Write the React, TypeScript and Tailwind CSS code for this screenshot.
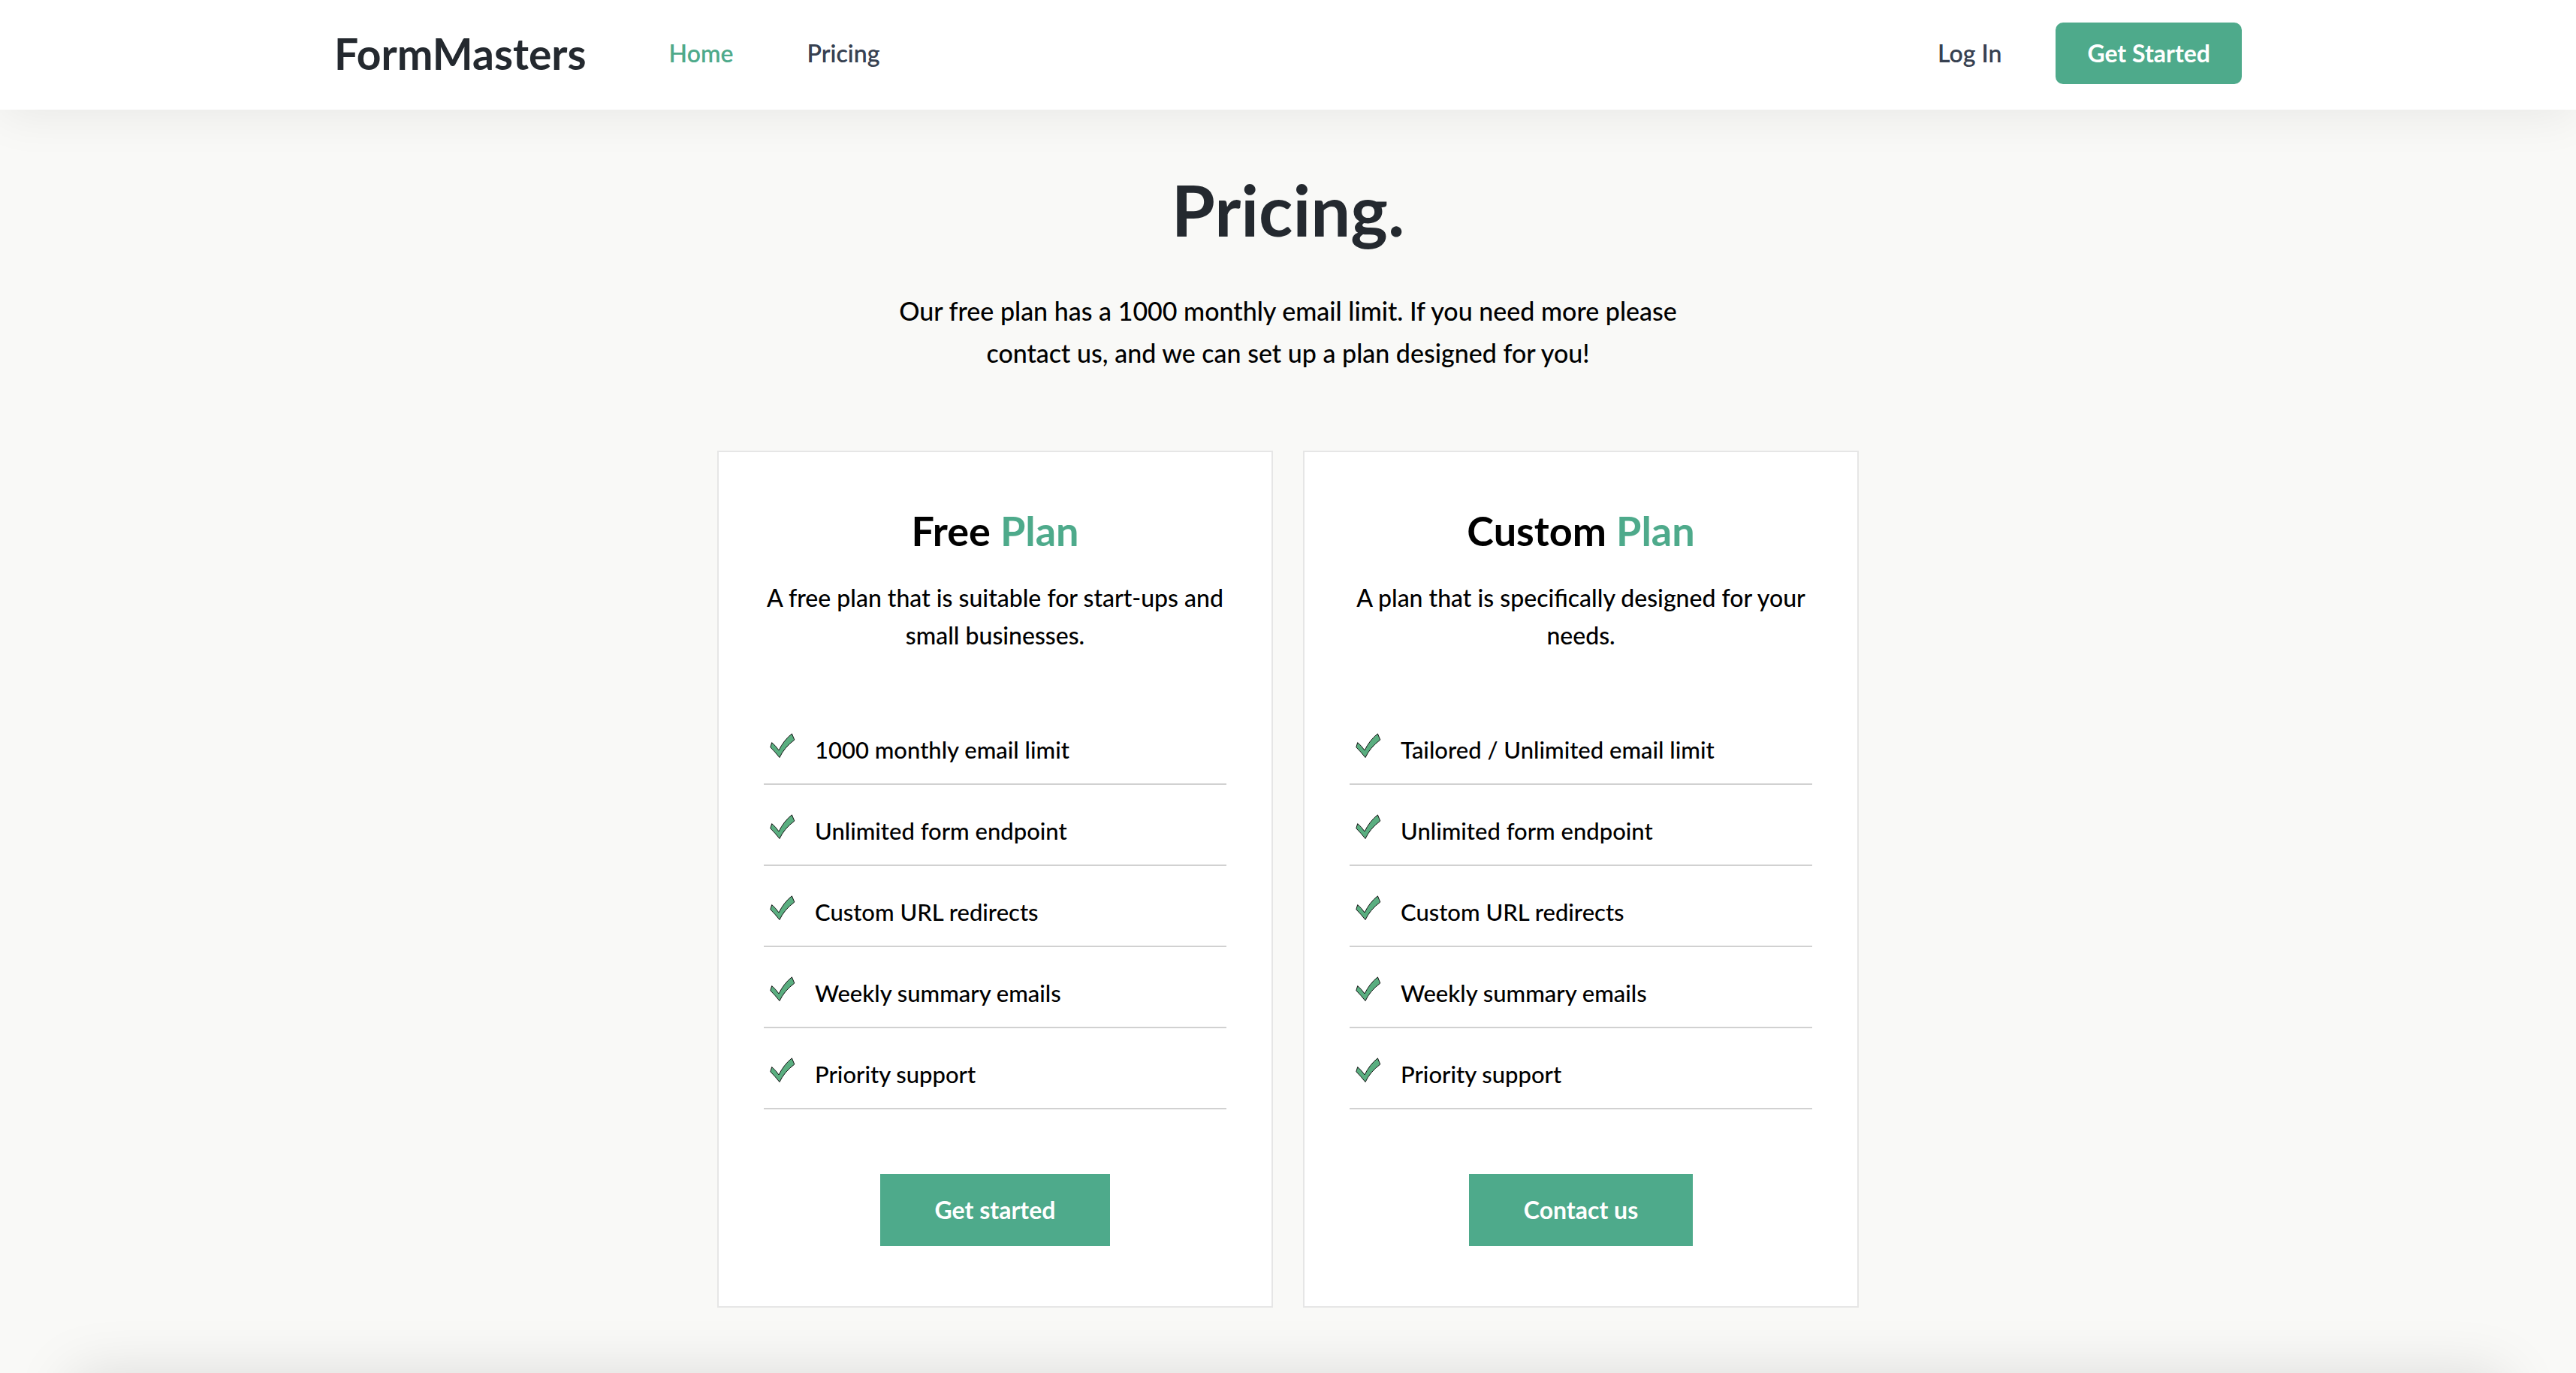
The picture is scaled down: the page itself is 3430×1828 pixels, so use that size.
type Plan = {
  name: string;
  description: string;
  features: string[];
  action: string;
};

const plans: Plan[] = [
  {
    name: "Free",
    description: "A free plan that is suitable for start-ups and small businesses.",
    features: [
      "1000 monthly email limit",
      "Unlimited form endpoint",
      "Custom URL redirects",
      "Weekly summary emails",
      "Priority support",
    ],
    action: "Get started",
  },
  {
    name: "Custom",
    description: "A plan that is specifically designed for your needs.",
    features: [
      "Tailored / Unlimited email limit",
      "Unlimited form endpoint",
      "Custom URL redirects",
      "Weekly summary emails",
      "Priority support",
    ],
    action: "Contact us",
  },
];

function CheckIcon() {
  return (
    <svg className="mt-[3px] size-[34px] shrink-0" viewBox="0 0 34 34" aria-hidden="true">
      <path
        d="M2.700 12.600 L0.800 18.800 Q7 25 13 32.600 Q19 19.500 32.800 9 L29.400 0.900 Q19 9 12 23 Q8 17 2.700 12.600 Z"
        fill="#5aae80"
        stroke="#111111"
        strokeWidth="1"
        strokeLinejoin="round"
      />
    </svg>
  );
}

function Header() {
  return (
    <header className="relative bg-white px-8 pt-[30px] pb-[34px] shadow-[0_8px_64px_rgba(0,0,0,0.07)]">
      <div className="mx-auto flex max-w-[2540px] items-center justify-between">
        <div className="flex items-center gap-[110px]">
          <a href="#" className="text-[57px] leading-[64px] font-bold text-[#24292f]">
            FormMasters
          </a>
          <nav className="flex items-center gap-[98px] text-[32px] leading-[50px] font-semibold">
            <a href="#" className="text-[#4eaa8b]">
              Home
            </a>
            <a href="#" className="text-[#374151]">
              Pricing
            </a>
          </nav>
        </div>
        <div className="flex items-center gap-[72px] text-[32px] leading-[50px]">
          <a href="#" className="font-semibold text-[#374151]">
            Log In
          </a>
          <button type="button" className="rounded-[10px] bg-[#4eaa8b] px-[42px] py-4 font-bold text-white">
            Get Started
          </button>
        </div>
      </div>
    </header>
  );
}

function PlanCard({ plan }: { plan: Plan }) {
  return (
    <article className="flex flex-col items-center border-2 border-[#e6e6e6] bg-white px-[60px] pt-[73px] pb-20 text-[32px] leading-[50px]">
      <h2 className="text-[54px] leading-[64px] font-bold">
        {plan.name} <span className="text-[#4eaa8b]">Plan</span>
      </h2>
      <p className="mt-8 text-center font-medium">{plan.description}</p>
      <ul className="mt-[66px] w-full">
        {plan.features.map((feature) => (
          <li
            key={feature}
            className="flex items-start gap-[26px] border-b-2 border-[#d1d1d1] pt-9 pb-5 pl-2 text-[31px] font-medium"
          >
            <CheckIcon />
            {feature}
          </li>
        ))}
      </ul>
      <button type="button" className="mt-[86px] bg-[#4eaa8b] px-[73px] py-[23px] font-bold text-white">
        {plan.action}
      </button>
    </article>
  );
}

export default function App() {
  return (
    <div className="min-h-screen overflow-hidden bg-[#f9f9f7] font-['Lato',sans-serif] text-black">
      <Header />
      <main className="px-8 pt-[85px] pb-[90px]">
        <h1 className="text-center text-[94px] leading-[96px] font-bold text-[#24292f]">Pricing.</h1>
        <p className="mx-auto mt-[59px] max-w-[1080px] text-center text-[34px] leading-[56px] font-medium">
          Our free plan has a 1000 monthly email limit. If you need more please contact us, and we can set up a
          plan designed for you!
        </p>
        <section className="mx-auto mt-[102px] grid max-w-[1520px] grid-cols-2 gap-10">
          {plans.map((plan) => (
            <PlanCard key={plan.name} plan={plan} />
          ))}
        </section>
      </main>
      <footer className="mx-24 -mb-24 h-24 shadow-[0_0_80px_rgba(0,0,0,0.13)]" />
    </div>
  );
}
